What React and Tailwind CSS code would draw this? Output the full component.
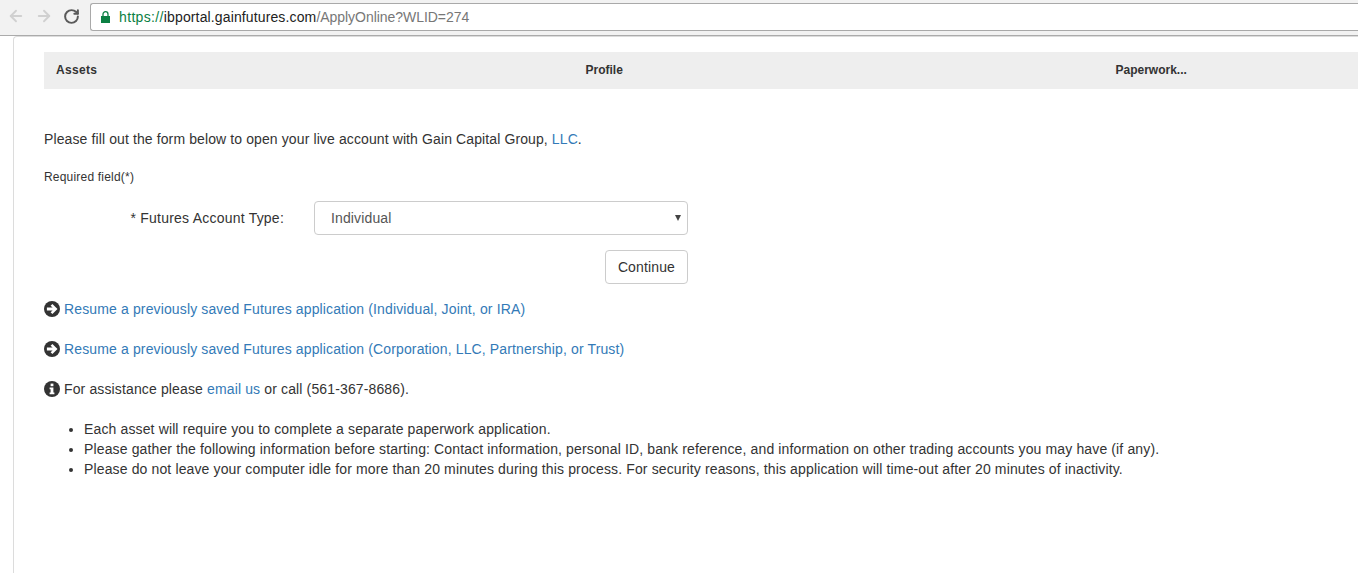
import { ArrowLeft, ArrowRight, RotateCw } from "lucide-react";

function CircleArrow() {
  return (
    <svg viewBox="0 0 16 16" className="w-4 h-4 shrink-0">
      <circle cx="8" cy="8" r="8" fill="#333" />
      <path d="M8.4 2.9 13.5 8 8.4 13.1 6.6 11.3 8.6 9.4H2.9V6.6H8.6L6.6 4.7Z" fill="#fff" />
    </svg>
  );
}

function CircleInfo() {
  return (
    <svg viewBox="0 0 16 16" className="w-4 h-4 shrink-0">
      <circle cx="8" cy="8" r="8" fill="#333" />
      <rect x="6.6" y="2.6" width="2.8" height="2.6" fill="#fff" />
      <path d="M5.6 6.4H9.4V11.4H10.4V13.2H5.6V11.4H6.6V8.2H5.6Z" fill="#fff" />
    </svg>
  );
}

function PadLock() {
  return (
    <svg viewBox="0 0 9 12" className="w-[9px] h-[12px] shrink-0 mr-[9px]">
      <path d="M2 5.5V3.2a2.5 2.5 0 0 1 5 0V5.5" fill="none" stroke="#0b8043" strokeWidth="1.3" />
      <rect x="0" y="5" width="9" height="7" fill="#0b8043" />
    </svg>
  );
}

export default function App() {
  return (
    <div className="w-[1358px] h-[573px] overflow-hidden bg-white font-['Liberation_Sans',Arial,sans-serif] text-[14px] leading-5 tracking-[0.135px] text-[#333]">
      <div className="h-[36px] bg-[#f2f2f2] border-b border-[#ababab] flex items-start">
        <div className="flex items-center gap-[10px] pl-[7px] pt-[7px] w-[90px]">
          <ArrowLeft className="w-[18px] h-[18px] text-[#d0d0d0]" strokeWidth={2.5} />
          <ArrowRight className="w-[18px] h-[18px] text-[#d0d0d0]" strokeWidth={2.5} />
          <RotateCw className="w-[17px] h-[17px] text-[#5a5a5a]" strokeWidth={2.8} />
        </div>
        <div className="flex-1 mt-[3px] h-[28px] bg-white border border-[#a9a9a9] rounded-l-[3px] border-r-0 flex items-center pl-[10px]">
          <PadLock />
          <span className="text-[14px]">
            <span className="text-[#0b8043] tracking-[0.35px]">https://</span>
            <span className="text-[#222] tracking-[0.13px]">ibportal.gainfutures.com</span>
            <span className="text-[#777] tracking-[-0.04px]">/ApplyOnline?WLID=274</span>
          </span>
        </div>
      </div>
      <div className="ml-[13px] h-[537px] border-l border-t border-[#dcdcdc] rounded-tl-[4px] pl-[30px] pt-[15px]">
        <div className="flex h-[37px] w-[1590px] bg-[#eeeeee] items-center pb-[2px] text-[12px] font-bold tracking-[0px]">
          <div className="w-[529.5px] pl-[12px] tracking-[0.3px]">Assets</div>
          <div className="w-[530px] pl-[12px]">Profile</div>
          <div className="w-[530px] pl-[12px]">Paperwork...</div>
        </div>
        <p className="mt-[40px] h-5 tracking-[0.11px]">
          Please fill out the form below to open your live account with Gain Capital Group, <span className="text-[#337ab7]">LLC</span>.
        </p>
        <p className="mt-[18px] text-[12px] tracking-[0.2px] h-5">Required field(*)</p>
        <div className="mt-[14px] flex w-[644px] items-center">
          <label className="w-[240px] text-right tracking-[0.22px]">* Futures Account Type:</label>
          <div className="ml-[30px] flex-1 h-[34px] border border-[#ccc] rounded-[4px] flex items-center justify-between pl-[16px] pr-[6px] text-[#555]">
            <span>Individual</span>
            <span className="w-0 h-0 border-x-[3.5px] border-x-transparent border-t-[6px] border-t-[#444]" />
          </div>
        </div>
        <div className="mt-[15px] flex w-[644px] justify-end">
          <button className="h-[34px] px-[12px] border border-[#ccc] rounded-[4px] bg-white text-[#333]">Continue</button>
        </div>
        <div className="mt-[15px] flex items-center gap-1 h-5 text-[#337ab7]">
          <CircleArrow />
          <span>Resume a previously saved Futures application (Individual, Joint, or IRA)</span>
        </div>
        <div className="mt-[20px] flex items-center gap-1 h-5 text-[#337ab7]">
          <CircleArrow />
          <span>Resume a previously saved Futures application (Corporation, LLC, Partnership, or Trust)</span>
        </div>
        <div className="mt-[20px] flex items-center gap-1 h-5">
          <CircleInfo />
          <span>
            For assistance please <span className="text-[#337ab7]">email us</span> or call (561-367-8686).
          </span>
        </div>
        <ul className="mt-[20px] list-disc pl-[40px]">
          <li>Each asset will require you to complete a separate paperwork application.</li>
          <li>Please gather the following information before starting: Contact information, personal ID, bank reference, and information on other trading accounts you may have (if any).</li>
          <li>Please do not leave your computer idle for more than 20 minutes during this process. For security reasons, this application will time-out after 20 minutes of inactivity.</li>
        </ul>
      </div>
    </div>
  );
}
